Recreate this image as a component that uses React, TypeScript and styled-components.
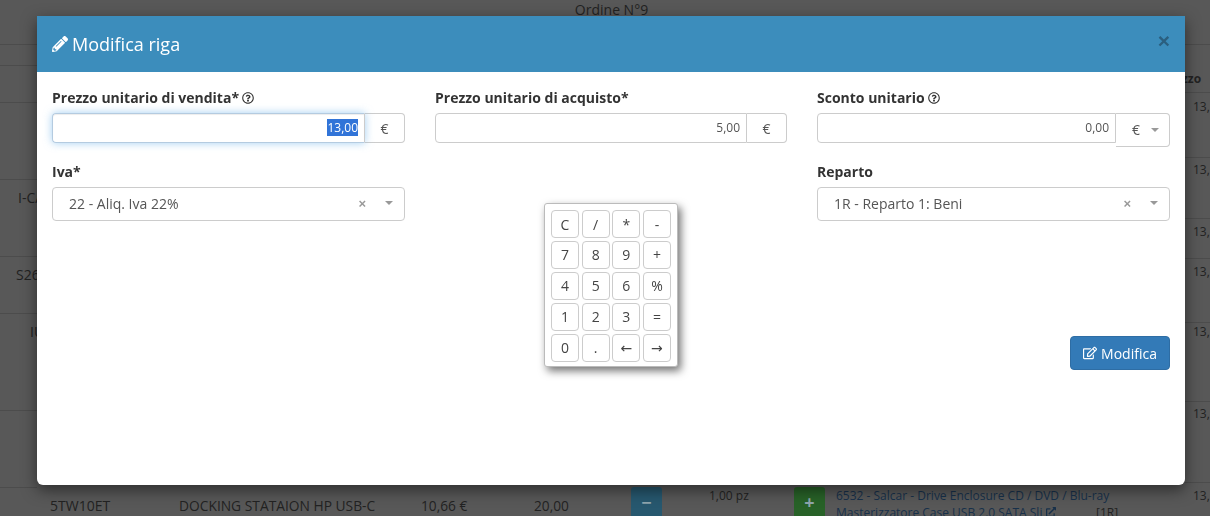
import React from 'react';
import styled, { createGlobalStyle } from 'styled-components';
import { FaPencilAlt, FaRegEdit, FaRegQuestionCircle, FaExternalLinkAlt } from 'react-icons/fa';

const KEYS = ['C', '/', '*', '-', '7', '8', '9', '+', '4', '5', '6', '%', '1', '2', '3', '=', '0', '.', '←', '→'];

const GlobalStyle = createGlobalStyle`
  html, body {
    margin: 0;
    padding: 0;
    height: 100%;
    overflow: hidden;
    background: #5a5a5a;
  }
  * { box-sizing: border-box; }
  body {
    font-family: 'Open Sans', 'Noto Sans', sans-serif;
    font-size: 14px;
    color: #333;
  }
`;

const Page = styled.div`
  position: relative;
  width: 1210px;
  height: 516px;
  overflow: hidden;
  background: #585858;
  color: #1f1f1f;
`;

const PageTitle = styled.div`
  text-align: center;
  font-size: 14px;
  line-height: 20px;
  color: #222;
  padding-left: 13px;
`;

const BackText = styled.span<{ $x: number; $y: number; $bold?: boolean; $size?: number }>`
  position: absolute;
  left: ${(p) => p.$x}px;
  top: ${(p) => p.$y}px;
  font-size: ${(p) => p.$size ?? 14}px;
  line-height: 20px;
  white-space: nowrap;
  color: #222;
  font-weight: ${(p) => (p.$bold ? 700 : 400)};
`;

const BackLine = styled.div<{ $y: number; $side?: 'left' | 'right' }>`
  position: absolute;
  left: ${(p) => (p.$side === 'right' ? '1185px' : '0')};
  width: ${(p) => (p.$side ? (p.$side === 'left' ? '37px' : '25px') : '1210px')};
  top: ${(p) => p.$y}px;
  height: 1px;
  background: #4c4c4c;
`;

const BackButton = styled.div<{ $x: number; $color: string }>`
  position: absolute;
  left: ${(p) => p.$x}px;
  top: 487px;
  width: 31px;
  height: 40px;
  background: ${(p) => p.$color};
  color: #8fa6ae;
  border-radius: 3px;
  text-align: center;
  font-size: 18px;
  line-height: 30px;
  font-weight: 700;
`;

const BackLink = styled.div`
  position: absolute;
  left: 836px;
  top: 487px;
  width: 300px;
  font-size: 12px;
  line-height: 17px;
  color: #17304a;
  & svg { width: 10px; height: 10px; margin-left: 0; }
`;

const Modal = styled.div`
  position: absolute;
  left: 37px;
  top: 16px;
  width: 1148px;
  height: 469px;
  background: #fff;
  border-radius: 0 0 6px 6px;
  box-shadow: 0 5px 15px rgba(0, 0, 0, 0.5);
  display: flex;
  flex-direction: column;
  will-change: opacity;
`;

const ModalHeader = styled.div`
  height: 56px;
  background: #3c8dbc;
  color: #fff;
  display: flex;
  align-items: center;
  justify-content: space-between;
  padding: 0 15px;
  font-size: 18px;
`;

const ModalTitle = styled.div`
  display: flex;
  align-items: center;
  gap: 4px;
  line-height: 26px;
  & svg { width: 16px; height: 16px; }
`;

const CloseMark = styled.span`
  align-self: flex-start;
  margin-top: 14px;
  font-size: 21px;
  line-height: 21px;
  font-weight: 700;
  color: #2b5f7f;
  font-family: 'Liberation Sans', sans-serif;
`;

const ModalBody = styled.div`
  flex: 1;
  padding: 16px 15px 15px;
  display: flex;
  flex-direction: column;
`;

const FieldGrid = styled.div`
  display: grid;
  grid-template-columns: 353px 352px 353px;
  column-gap: 30px;
  row-gap: 19px;
`;

const Field = styled.div`
  display: flex;
  flex-direction: column;
`;

const Label = styled.label`
  display: flex;
  align-items: center;
  gap: 3px;
  font-weight: 700;
  font-size: 14px;
  line-height: 20px;
  margin-bottom: 5px;
  color: #333;
  & svg { width: 12px; height: 12px; }
`;

const InputGroup = styled.div`
  display: flex;
  height: 30px;
`;

const NumberInput = styled.div<{ $focused?: boolean }>`
  flex: 1;
  height: 30px;
  border: 1px solid ${(p) => (p.$focused ? '#b4cbe0' : '#ccc')};
  border-right: 1px solid #ccc;
  border-radius: 4px 0 0 4px;
  font-size: 12px;
  line-height: 28px;
  text-align: right;
  color: #555;
  padding: 0 6px 0 5px;
  box-shadow: ${(p) =>
    p.$focused ? 'inset 0 1px 1px rgba(0,0,0,.075), 0 0 8px rgba(102,175,233,.6)' : 'none'};
  position: relative;
`;

const Selected = styled.span`
  background: #3174d8;
  color: #fff;
  display: inline-block;
  line-height: 17px;
  vertical-align: middle;
  margin-top: -2px;
`;

const Addon = styled.div`
  width: 40px;
  height: 30px;
  border: 1px solid #ccc;
  border-left: 0;
  border-radius: 0 4px 4px 0;
  display: flex;
  align-items: center;
  justify-content: center;
  font-size: 14px;
  color: #555;
`;

const AddonSelect = styled.div`
  width: 54px;
  height: 34px;
  border: 1px solid #ccc;
  border-left: 0;
  border-top-right-radius: 4px;
  border-bottom-right-radius: 4px;
  display: flex;
  align-items: center;
  padding: 0 0 1px 16px;
  gap: 11px;
  font-size: 14px;
  color: #555;
`;

const Caret = styled.span`
  width: 0;
  height: 0;
  border-left: 4px solid transparent;
  border-right: 4px solid transparent;
  border-top: 4px solid #999;
`;

const SelectBox = styled.div`
  height: 34px;
  border: 1px solid #ccc;
  border-radius: 4px;
  display: flex;
  align-items: center;
  padding: 0 11px 2px 16px;
  font-size: 14px;
  color: #555;
`;

const SelectValue = styled.span`
  flex: 1;
`;

const ClearMark = styled.span`
  color: #999;
  font-size: 13px;
  margin-right: 19px;
  font-weight: 700;
  font-family: 'Liberation Sans', sans-serif;
`;

const Footer = styled.div`
  margin-top: auto;
  display: flex;
  justify-content: flex-end;
  padding-bottom: 100px;
`;

const SubmitButton = styled.button`
  height: 34px;
  width: 100px;
  background: #337ab7;
  border: 1px solid #2e6da4;
  border-radius: 4px;
  color: #fff;
  font-family: inherit;
  font-size: 14px;
  display: flex;
  align-items: center;
  justify-content: center;
  gap: 4px;
  padding: 0;
  & svg { width: 14px; height: 14px; }
`;

const Calculator = styled.div`
  position: absolute;
  left: 544px;
  top: 203px;
  width: 134px;
  height: 164px;
  background: #fff;
  border: 1px solid #bbb;
  border-radius: 3px;
  box-shadow: 3px 4px 9px rgba(0, 0, 0, 0.55);
  padding: 6px;
  display: grid;
  grid-template-columns: repeat(4, 28px);
  grid-auto-rows: 28px;
  column-gap: 2.67px;
  row-gap: 2.9px;
  will-change: opacity;
`;

const CalcKey = styled.div`
  border: 1px solid #ccc;
  border-radius: 4px;
  display: flex;
  align-items: center;
  justify-content: center;
  font-family: 'Open Sans', 'DejaVu Sans', sans-serif;
  font-size: 14px;
  color: #444;
`;

export default function App() {
  return (
    <Page>
      <GlobalStyle />
      <PageTitle>Ordine N°9</PageTitle>
      <BackLine $y={44} />
      <BackLine $y={65} $side="left" />
      <BackLine $y={102} $side="left" />
      <BackLine $y={179} $side="left" />
      <BackLine $y={256} $side="left" />
      <BackLine $y={313} $side="left" />
      <BackLine $y={410} $side="left" />
      <BackLine $y={487} $side="left" />
      <BackLine $y={92} $side="right" />
      <BackLine $y={157} $side="right" />
      <BackLine $y={218} $side="right" />
      <BackLine $y={258} $side="right" />
      <BackLine $y={322} $side="right" />
      <BackLine $y={401} $side="right" />
      <BackLine $y={482} $side="right" />
      <BackText $x={18} $y={188}>I-CA</BackText>
      <BackText $x={16} $y={265}>S26</BackText>
      <BackText $x={30} $y={322}>IU</BackText>
      <BackText $x={1182} $y={69} $bold $size={12}>zzo</BackText>
      <BackText $x={1193} $y={97} $size={12}>13,</BackText>
      <BackText $x={1193} $y={160} $size={12}>13,</BackText>
      <BackText $x={1193} $y={222} $size={12}>13,</BackText>
      <BackText $x={1193} $y={262} $size={12}>13,</BackText>
      <BackText $x={1193} $y={322} $size={12}>13,</BackText>
      <BackText $x={1193} $y={404} $size={12}>13,</BackText>
      <BackText $x={1193} $y={486} $size={12}>13,</BackText>
      <BackText $x={50} $y={496}>5TW10ET</BackText>
      <BackText $x={179} $y={496} $size={13.8}>DOCKING STATAION HP USB-C</BackText>
      <BackText $x={421} $y={496} $size={13.7}>10,66 €</BackText>
      <BackText $x={534} $y={496} $size={13.7}>20,00</BackText>
      <BackText $x={709} $y={486} $size={12}>1,00 pz</BackText>
      <BackButton $x={631} $color="#27586f">−</BackButton>
      <BackButton $x={794} $color="#286228">+</BackButton>
      <BackLink>
        6532 - Salcar - Drive Enclosure CD / DVD / Blu-ray
        <br />
        Masterizzatore Case USB 2.0 SATA Sli <FaExternalLinkAlt />
      </BackLink>
      <BackText $x={1096} $y={503} $size={12}>[1R]</BackText>

      <Modal>
        <ModalHeader>
          <ModalTitle>
            <FaPencilAlt />
            Modifica riga
          </ModalTitle>
          <CloseMark>×</CloseMark>
        </ModalHeader>
        <ModalBody>
          <FieldGrid>
            <Field>
              <Label>
                Prezzo unitario di vendita* <FaRegQuestionCircle />
              </Label>
              <InputGroup>
                <NumberInput $focused>
                  <Selected>13,00</Selected>
                </NumberInput>
                <Addon>€</Addon>
              </InputGroup>
            </Field>
            <Field>
              <Label>Prezzo unitario di acquisto*</Label>
              <InputGroup>
                <NumberInput>5,00</NumberInput>
                <Addon>€</Addon>
              </InputGroup>
            </Field>
            <Field>
              <Label>
                Sconto unitario <FaRegQuestionCircle />
              </Label>
              <InputGroup>
                <NumberInput>0,00</NumberInput>
                <AddonSelect>
                  €
                  <Caret />
                </AddonSelect>
              </InputGroup>
            </Field>
            <Field>
              <Label>Iva*</Label>
              <SelectBox>
                <SelectValue>22 - Aliq. Iva 22%</SelectValue>
                <ClearMark>×</ClearMark>
                <Caret />
              </SelectBox>
            </Field>
            <div />
            <Field>
              <Label>Reparto</Label>
              <SelectBox>
                <SelectValue>1R - Reparto 1: Beni</SelectValue>
                <ClearMark>×</ClearMark>
                <Caret />
              </SelectBox>
            </Field>
          </FieldGrid>
          <Footer>
            <SubmitButton>
              <FaRegEdit />
              Modifica
            </SubmitButton>
          </Footer>
        </ModalBody>
      </Modal>

      <Calculator>
        {KEYS.map((key) => (
          <CalcKey key={key}>{key}</CalcKey>
        ))}
      </Calculator>
    </Page>
  );
}
